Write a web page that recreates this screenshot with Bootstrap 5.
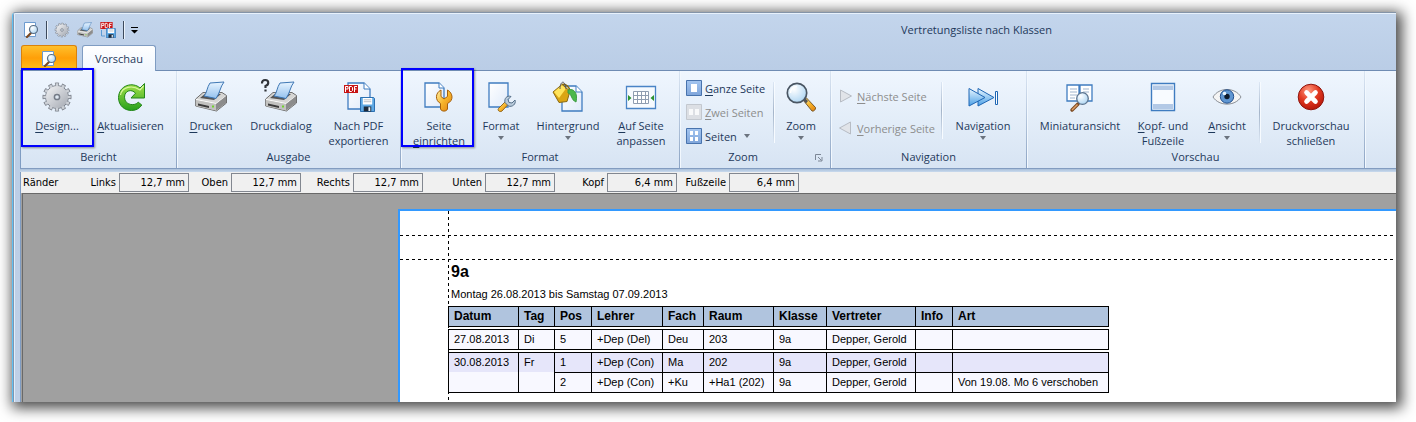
<!DOCTYPE html>
<html lang="de">
<head>
<meta charset="utf-8">
<meta name="viewport" content="width=device-width, initial-scale=1">
<title>Vertretungsliste nach Klassen</title>
<link href="https://cdn.jsdelivr.net/npm/bootstrap@5.3.0/dist/css/bootstrap.min.css" rel="stylesheet">
<style>
  body { background: #fff; font: 11px/15px "Open Sans", "Noto Sans", sans-serif; color: #1e395b; padding: 12px 20px 20px 12px; overflow: hidden; }
  button { font: inherit; color: inherit; background: none; border: 0; padding: 0; white-space: nowrap; }
  button:disabled { color: #8d8d8d; }
  u { text-underline-offset: 2px; }
  .app-window { background: #bfd0e7; border-top: 1px solid #8494a8; border-left: 1px solid #5fc0f2; border-top-left-radius: 4px; box-shadow: 3px 3px 14px 3px rgba(0,0,0,.72); overflow: hidden; }
  .app-frame { border-left: 1px solid #7f95b0; border-top: 1px solid #e8f1fb; padding-left: 6px; box-shadow: inset 1px 0 #e3edf8; background: linear-gradient(#c3d5ec, #bacde6 56px, #bfd0e7); }
  .title-bar { height: 31px; }
  .quick-bar { gap: 7px; padding-left: 3px; }
  .quick-bar button { line-height: 0; }
  .quick-bar svg { width: 16px; height: 16px; }
  .quick-rule { width: 1px; height: 18px; background: #3d4a5c; box-shadow: 1px 0 #e9f1fa; }
  .window-title { margin-right: 25%; }
  .tab-row { height: 25px; gap: 5px; padding-left: 1px; }
  .file-tab { width: 56px; border: 1px solid #d9820c; border-bottom: 0; border-radius: 3px 3px 0 0; background: linear-gradient(#ffc02c, #ff9f08 50%, #ffc01c); }
  .view-tab { width: 74px; height: 26px; border: 1px solid #7f9cc2; border-bottom: 0; border-radius: 3px 3px 0 0; background: linear-gradient(#fff, #eff6fe); z-index: 2; }
  .ribbon { border-top: 1px solid #6f8cb3; border-left: 1px solid #7f9cc2; border-bottom: 1px solid #829cc0; background: linear-gradient(#eff6fe, #d7e4f3); height: 99px; }
  .ribbon-group { padding: 5px 4px 3px; border-right: 1px solid; border-image: linear-gradient(#dbe6f3, #8ba3c3) 1; box-shadow: 1px 0 #f2f8fe; }
  .group-name { line-height: 16px; }
  .cmd { display: flex; flex-direction: column; align-items: center; position: relative; margin-top: 3px; }
  .cmd svg.big { width: 32px; height: 32px; margin: 2px 0 5px; }
  .caret { width: 0; border: 3px solid transparent; border-top: 4px solid #6b737e; border-bottom: 0; }
  .cmd .caret { margin-top: 3px; }
  .w-s { width: 50px; } .w-m { width: 56px; } .w-l { width: 68px; } .w-xl { width: 78px; } .w-xxl { width: 98px; }
  .w-design { width: 64px; } .w-refresh { width: 83px; } .w-print { width: 60px; } .w-dialog { width: 80px; } .w-pdf { width: 75px; }
  .small-cmd { display: flex; align-items: center; gap: 3px; height: 24px; }
  .small-cmd svg { width: 16px; height: 16px; flex: none; }
  .zoom-cmds { width: 87px; padding-left: 2px; }
  .nav-cmds { width: 104px; padding: 4px 0 0 3px; }
  .nav-cmds .small-cmd { height: 32px; }
  .inner-rule { width: 1px; margin: 6px 2px 5px; background: linear-gradient(#dce7f4, #a5b5ca, #dce7f4); box-shadow: 1px 0 #f7fbff; }
  .highlight { position: absolute; left: -4px; top: -11px; width: 73px; height: 79px; border: 2px solid #00f; box-shadow: 1px 1px 2px rgba(0,0,0,.4); pointer-events: none; z-index: 3; }
  .launcher { position: absolute; right: 7px; bottom: 6px; line-height: 0; }
  .under-ribbon { height: 3px; background: linear-gradient(#a9bfd9, #c9daee); }
  .margin-bar { height: 21px; background: #f0f0f0; color: #000; font: 11px/19px "DejaVu Sans Condensed", "Noto Sans", sans-serif; padding-left: 2px; border-left: 1px solid #7f9cc2; }
  .margin-bar input { width: 70px; height: 19px; border: 1px solid #828790; background: #f0f0f0; color: #000; text-align: right; padding: 0 3px; font: inherit; border-radius: 0; }
  .margin-bar label, .margin-lead { text-align: right; padding-right: 3px; width: 52px; }
  .margin-bar .tight { width: 42px; } .margin-bar .loose { width: 62px; }
  .margin-bar .margin-lead { width: 44px; text-align: left; }
  .desk { border-left: 1px solid #7f9cc2; background: #a0a0a0; height: 209px; overflow: hidden; }
  .desk-inner { border-top: 1px solid #696969; border-left: 1px solid #696969; margin-left: 1px; padding: 15px 0 0 375px; height: 100%; }
  .sheet { position: relative; border: solid #3399ff; border-width: 2px 0 0 2px; background: #fff; height: 240px; padding: 51px 0 0 48px; color: #000; font: 11px/14px "Liberation Sans", Arial, sans-serif; }
  .guide-h { position: absolute; left: 0; right: 0; height: 1px; background: repeating-linear-gradient(90deg, #000 0 3px, transparent 3px 6px); }
  .guide-v { position: absolute; top: 0; bottom: 0; left: 48px; width: 1px; background: repeating-linear-gradient(#000 0 3px, transparent 3px 6px); }
  .guide-top { top: 24px; } .guide-body { top: 48px; }
  .sheet h1 { font-size: 16px; line-height: 19px; font-weight: 700; margin: 0 0 6px 3px; }
  .sheet p { margin: 0 0 5px 3px; line-height: 14px; }
  .plan { position: relative; table-layout: fixed; width: 661px; border-collapse: separate; border-spacing: 0; }
  .plan th, .plan td { border: 0 solid #000; border-width: 1px 0 0 1px; padding: 0 0 0 5px; height: 20px; line-height: 19px; background: #f8f8ff; white-space: nowrap; }
  .plan th { background: #b0c4de; font-size: 12px; }
  .plan tr > :last-child { border-right-width: 1px; }
  .plan .closing > * { border-bottom-width: 1px; height: 21px; }
  .plan .shade td { background: #e6e6fa; }
  .plan .merged { border-top-width: 0; }
  .plan .gap-line td { height: 2px; line-height: 0; border: 0; padding: 0; background: none; }
  .c-date { width: 70px; } .c-day { width: 36px; } .c-slot { width: 37px; } .c-teach { width: 71px; } .c-subj { width: 41px; } .c-class { width: 53px; } .c-sub { width: 89px; }
</style>
</head>
<body>
<svg width="0" height="0" class="position-absolute" aria-hidden="true">
  <defs>
    <linearGradient id="gGrey" x2="1" y2="1"><stop stop-color="#f2f3f5"/><stop offset="1" stop-color="#a4a9b2"/></linearGradient>
    <linearGradient id="gGreen" x2="0" y2="1"><stop stop-color="#a6e24b"/><stop offset="1" stop-color="#27a01c"/></linearGradient>
    <linearGradient id="gPaper" x2="1" y2="1"><stop stop-color="#fff"/><stop offset="1" stop-color="#dfeafa"/></linearGradient>
    <linearGradient id="gSheet" x2="0" y2="1"><stop stop-color="#e8f4ff"/><stop offset="1" stop-color="#94c2ee"/></linearGradient>
    <linearGradient id="gGold" x2="1" y2="1"><stop stop-color="#fff0a8"/><stop offset=".5" stop-color="#f7b52b"/><stop offset="1" stop-color="#e07d10"/></linearGradient>
    <linearGradient id="gBlue" x2="0" y2="1"><stop stop-color="#e9f7ff"/><stop offset="1" stop-color="#4a9fe6"/></linearGradient>
    <linearGradient id="gTile" x2="0" y2="1"><stop stop-color="#a3c5f0"/><stop offset="1" stop-color="#7fa5da"/></linearGradient>
    <radialGradient id="gRed" cx=".4" cy=".25" r=".8"><stop stop-color="#ff9a80"/><stop offset=".5" stop-color="#e23a22"/><stop offset="1" stop-color="#b31307"/></radialGradient>
    <radialGradient id="gLens" cx=".35" cy=".3" r=".8"><stop stop-color="#fff"/><stop offset="1" stop-color="#a9d3f2"/></radialGradient>
    <symbol id="i-gear" viewBox="0 0 32 32">
      <circle cx="16" cy="16" r="12" pathLength="120" fill="none" stroke="#7b818b" stroke-width="5" stroke-dasharray="6 4" stroke-dashoffset="3"/>
      <circle cx="16" cy="16" r="11.500" fill="url(#gGrey)" stroke="#7b818b"/>
      <circle cx="16" cy="16" r="11.700" pathLength="120" fill="none" stroke="#ccd0d6" stroke-width="4" stroke-dasharray="4 6" stroke-dashoffset="2"/>
      <circle cx="16" cy="16" r="10.800" fill="url(#gGrey)"/>
      <circle cx="16" cy="16" r="2.600" fill="#dfe8f2" stroke="#747b86" stroke-width="1.500"/>
    </symbol>
    <symbol id="i-refresh" viewBox="0 0 32 32">
      <path d="M28.500 17V2.500l-4.500 4.500C17 .5 3 4 2.500 16.500c0 8.500 6.500 13 13 13 4.500 0 8-2 10.300-5.500l-3.600-2.800c-2.800 4-13.700 3.500-13.700-5 0-7 7.500-8.500 11-4L15 17z" transform="translate(1)" fill="url(#gGreen)" stroke="#22861a"/>
      <path d="M5.500 14C7 6 17 3.500 25 9l3.500-4" fill="none" stroke="#d9f7a0" stroke-width="1.200"/>
    </symbol>
    <symbol id="i-printer" viewBox="0 0 32 32">
      <path d="M.7 18L8 11.500h19l4.500 3V22L21.500 30 .7 25z" fill="#d6d6d4" stroke="#6f6f6f"/>
      <path d="M1 18.500l20 4L31 15" fill="none" stroke="#fff"/>
      <path d="M1 19l20 4v6.500L1 25z" fill="#c2c2c0"/><path d="M21 23l10-8v7l-10 7.500z" fill="#8c8c8c"/>
      <path d="M3 22.500l11 2.500v2L3 24.500z" fill="#3c3c3c"/><path d="M17 24.500h2v2h-2z" fill="#72d42e"/>
      <path d="M5 17l6-5 15 1-7 6z" fill="#555"/>
      <path d="M9 15C12 12 12 6 15 2l14-1c-4 5-4 11-8 16.500z" fill="url(#gSheet)" stroke="#3f78b5"/>
    </symbol>
    <symbol id="i-pdfbox" viewBox="0 0 14 8">
      <path d="M0 0h14v8H0z" fill="#c81414"/>
      <path d="M1.500 7V1.500H4v2.500H1.500M5.500 1.500v5h2l1-1v-3l-1-1zM10.500 7V1.500h2.500M10.500 4h2" fill="none" stroke="#fff"/>
    </symbol>
    <symbol id="i-disk" viewBox="0 0 16 16">
      <path d="M.5.500h14l1 1v14H.5z" fill="#5fa9e4" stroke="#2168ac"/><path d="M3 1h10v7H3z" fill="#fff"/><path d="M4 3h8M4 5h8" stroke="#b9bcc2"/><path d="M4 10h8v5.500H4z" fill="#1d2a3a"/><path d="M9 11h2v4H9z" fill="#e8f0f8"/>
    </symbol>
    <symbol id="i-doc" viewBox="0 0 24 28">
      <path d="M1 1h16l6 6v20H1z" fill="url(#gPaper)" stroke="#3f7cc0" stroke-width="1.300"/><path d="M17 1v6h6" fill="#fff" stroke="#3f7cc0"/>
    </symbol>
    <symbol id="i-pdf" viewBox="0 0 32 32">
      <use href="#i-doc" x="4" y="1" width="24" height="28"/><use href="#i-pdfbox" x="1" y="4" width="14" height="8"/><use href="#i-disk" x="17" y="16" width="15" height="15"/>
    </symbol>
    <symbol id="i-save" viewBox="0 0 16 16">
      <use href="#i-pdfbox" width="13" height="7"/><use href="#i-disk" x="6" y="6" width="10" height="10"/><path d="M1.500 8v6H5" fill="none" stroke="#5b9bd5"/>
    </symbol>
    <symbol id="i-lens" viewBox="0 0 32 32">
      <path d="M18.500 19.500l3-2.500 9 9.500c.5 2-2 4.300-3.500 3.500z" fill="url(#gGold)" stroke="#7a5a28"/><path d="M18 19l2-2 3 3-2 2.500z" fill="#555"/>
      <circle cx="12" cy="12" r="9.700" fill="url(#gLens)" stroke="#4a5663" stroke-width="1.700"/>
      <path d="M5.500 12c0-4 3-6.500 6.500-6.500" fill="none" stroke="#fff" stroke-width="1.500"/>
    </symbol>
    <symbol id="i-preview" viewBox="0 0 16 16">
      <path d="M1.500.500h11v14h-11z" fill="#fff" stroke="#6c9bd0"/><path d="M8 11l-4 4" stroke="#7c4a22" stroke-width="2.200" stroke-linecap="round"/><circle cx="10.500" cy="7.500" r="4" fill="url(#gLens)" stroke="#5b6f86" stroke-width="1.200"/>
    </symbol>
    <symbol id="i-setup" viewBox="0 0 32 32">
      <path d="M2 2h14l5 5v19H2z" fill="url(#gPaper)" stroke="#3f7cc0" stroke-width="1.300"/><path d="M16 2v5h5" fill="#fff" stroke="#3f7cc0"/>
      <path d="M18 9c-6 3-6 10.500-.5 13.500V28c1 2.800 6 2.800 7 0v-5.500C31 19.500 30 12 24.500 9v6.500L21 18l-3-2.500z" fill="url(#gGold)" stroke="#a5600c"/>
    </symbol>
    <symbol id="i-format" viewBox="0 0 32 32">
      <path d="M4 2h19v24H4z" fill="url(#gPaper)" stroke="#3f7cc0" stroke-width="1.300"/>
      <path d="M13.500 27.500l7-7 3 2.500-6.500 7c-2 1.500-5-.5-3.500-2.500z" fill="url(#gGold)" stroke="#94681a"/>
      <path d="M20 21.500c-1-4 2-7.500 6-6l-3 3 1 3 3 .5 3-3c1.500 4-3 7.500-6.500 6z" fill="#b9cbdb" stroke="#566f88"/>
    </symbol>
    <symbol id="i-fill" viewBox="0 0 32 32">
      <path d="M10 5h14l6 6v19H10z" fill="url(#gPaper)" stroke="#3f7cc0" stroke-width="1.300"/><path d="M24 5v6h6" fill="#fff" stroke="#3f7cc0"/>
      <path d="M1 11L10 3.500l8 6.500-3 10.500-8 1z" fill="#dba514" stroke="#8a6a10"/><path d="M2 11l8-7 4 3.500-7 9.500z" fill="#ffe45c"/>
      <path d="M10 3.500c4-1 8 3 8 7" fill="none" stroke="#8a6a10" stroke-width="1.500"/><path d="M8 8c0-8 5-10 6 0" fill="none" stroke="#555"/>
      <path d="M16 9c6-2 10 3 8 12-5-2-4-8-8-9z" fill="#4bb84b" stroke="#3d9c44"/>
    </symbol>
    <symbol id="i-fit" viewBox="0 0 32 32">
      <path d="M1.500 5.500h29v22h-29z" fill="#f6fafe" stroke="#4a84c6" stroke-width="1.300"/>
      <path d="M8.500 10.500h15v12h-15zM8.500 14.500h15M8.500 18.500h15M12.500 10.500v12M16.500 10.500v12M20.500 10.500v12" fill="#fff" stroke="#8f9db0"/>
      <path d="M3 14v6l3.500-3zM29 14v6l-3.500-3z" fill="#2d9431"/>
    </symbol>
    <symbol id="i-one" viewBox="0 0 16 16"><path d="M.5.500h15v15H.5z" fill="url(#gTile)" stroke="#4873ad"/><path d="M5 4h6v8H5z" fill="#fff"/></symbol>
    <symbol id="i-two" viewBox="0 0 16 16"><path d="M.5.500h15v15H.5z" fill="#dcdfe4" stroke="#c3c8cf"/><path d="M3 5h4v6H3zM9 5h4v6H9z" fill="#f8f9fa"/></symbol>
    <symbol id="i-four" viewBox="0 0 16 16"><path d="M.5.500h15v15H.5z" fill="url(#gTile)" stroke="#4873ad"/><path d="M4 3h3v4H4zM9 3h3v4H9zM4 9h3v4H4zM9 9h3v4H9z" fill="#fff"/></symbol>
    <symbol id="i-next" viewBox="0 0 16 16"><path d="M2.500 2l11 6-11 6z" fill="#e1e4e9" stroke="#b7bcc4" stroke-linejoin="round"/></symbol>
    <symbol id="i-prev" viewBox="0 0 16 16"><path d="M12.500 2l-11 6 11 6z" fill="#e1e4e9" stroke="#b7bcc4" stroke-linejoin="round"/></symbol>
    <symbol id="i-skip" viewBox="0 0 32 32">
      <path d="M11 7.500l16 9-16 8.500z" fill="url(#gBlue)" stroke="#1e66b4" stroke-linejoin="round"/><path d="M2 7.500l16 9L2 25z" fill="url(#gBlue)" stroke="#1e66b4" stroke-linejoin="round"/><path d="M28.500 10.500h2v13h-2z" fill="#fff" stroke="#1e66b4"/>
    </symbol>
    <symbol id="i-mini" viewBox="0 0 32 32">
      <path d="M3 4h12v16H3zM16 4h12v16H16z" fill="#fff" stroke="#3f7cc0" stroke-width="1.300"/>
      <path d="M6 8h7M6 11h7M6 14h7M6 17h5M19 8h6M19 11h6" stroke="#9fb4cc"/>
      <path d="M14 23l-6 6" stroke="#7c4a22" stroke-width="3.500" stroke-linecap="round"/><path d="M13.500 23.500l-5.500 5.500" stroke="#e0a068" stroke-width="1.500"/>
      <circle cx="18.500" cy="17.500" r="5.800" fill="url(#gLens)" stroke="#5d7590" stroke-width="1.300"/>
    </symbol>
    <symbol id="i-header" viewBox="0 0 32 32"><path d="M4.500 2.500h23v27h-23z" fill="#f8fbff" stroke="#3f7cc0" stroke-width="1.400"/><path d="M6 4.500h20V9H6zM6 23h20v5H6z" fill="#b3c9e6"/></symbol>
    <symbol id="i-eye" viewBox="0 0 32 32">
      <path d="M2 16C8 6 24 6 30 16 24 25.500 8 25.500 2 16z" fill="#f4f4f4" stroke="#8a8f96"/><circle cx="16" cy="15.500" r="6.700" fill="#5f96d2" stroke="#234f8c"/><circle cx="16" cy="15.500" r="2.700" fill="#0d1a2c"/><circle cx="13.500" cy="12.500" r="1.800" fill="#e8f5ff"/>
    </symbol>
    <symbol id="i-close" viewBox="0 0 32 32"><circle cx="16" cy="16" r="12.800" fill="url(#gRed)" stroke="#8f1710"/><path d="M11.500 11.500l9 9M20.500 11.500l-9 9" stroke="#fff" stroke-width="4.600" stroke-linecap="round"/></symbol>
  </defs>
</svg>

<div class="app-window">
  <div class="app-frame">
    <header class="title-bar d-flex align-items-center">
      <div class="quick-bar d-flex align-items-center">
        <button aria-label="Vorschau"><svg><use href="#i-preview"/></svg></button>
        <span class="quick-rule"></span>
        <button aria-label="Design"><svg><use href="#i-gear"/></svg></button>
        <button aria-label="Drucken"><svg><use href="#i-printer"/></svg></button>
        <button aria-label="Nach PDF exportieren"><svg><use href="#i-save"/></svg></button>
        <span class="quick-rule"></span>
        <button aria-label="Anpassen"><svg viewBox="0 0 16 16"><path d="M0 5h7v1H0zM0 8h7L3.500 11.500z" fill="#000"/></svg></button>
      </div>
      <div class="window-title ms-auto">Vertretungsliste nach Klassen</div>
    </header>

    <nav class="tab-row d-flex">
      <button class="file-tab" aria-label="Datei"><svg width="16" height="16"><use href="#i-preview"/></svg></button>
      <button class="view-tab position-relative">Vorschau</button>
    </nav>

    <div class="ribbon d-flex">
      <section class="ribbon-group d-flex flex-column justify-content-between">
        <div class="d-flex">
          <button class="cmd w-design"><svg class="big"><use href="#i-gear"/></svg><span><u>D</u>esign...</span><span class="highlight"></span></button>
          <button class="cmd w-refresh"><svg class="big"><use href="#i-refresh"/></svg><span><u>A</u>ktualisieren</span></button>
        </div>
        <div class="group-name text-center">Bericht</div>
      </section>

      <section class="ribbon-group d-flex flex-column justify-content-between">
        <div class="d-flex">
          <button class="cmd w-print"><svg class="big"><use href="#i-printer"/></svg><span><u>D</u>rucken</span></button>
          <button class="cmd w-dialog"><svg class="big" viewBox="0 0 32 32" overflow="visible"><use href="#i-printer"/><path d="M-3 3.500Q-3 0 .2 0T3.200 3Q3.200 5 .5 6v2M.5 9.500v2" transform="translate(0 -1)" fill="none" stroke="#30343a" stroke-width="2.200"/></svg><span>Druckdialog</span></button>
          <button class="cmd w-pdf"><svg class="big"><use href="#i-pdf"/></svg><span>Nach PDF<br>exportieren</span></button>
        </div>
        <div class="group-name text-center">Ausgabe</div>
      </section>

      <section class="ribbon-group d-flex flex-column justify-content-between">
        <div class="d-flex">
          <button class="cmd w-l"><svg class="big"><use href="#i-setup"/></svg><span>Seite<br><u>e</u>inrichten</span><span class="highlight"></span></button>
          <button class="cmd w-m"><svg class="big"><use href="#i-format"/></svg><span>Format</span><span class="caret"></span></button>
          <button class="cmd w-xl"><svg class="big"><use href="#i-fill"/></svg><span>Hintergrund</span><span class="caret"></span></button>
          <button class="cmd w-l"><svg class="big"><use href="#i-fit"/></svg><span><u>A</u>uf Seite<br>anpassen</span></button>
        </div>
        <div class="group-name text-center">Format</div>
      </section>

      <section class="ribbon-group d-flex flex-column justify-content-between position-relative">
        <div class="d-flex">
          <div class="zoom-cmds d-flex flex-column">
            <button class="small-cmd"><svg><use href="#i-one"/></svg><span><u>G</u>anze Seite</span></button>
            <button class="small-cmd" disabled><svg><use href="#i-two"/></svg><span><u>Z</u>wei Seiten</span></button>
            <button class="small-cmd"><svg><use href="#i-four"/></svg><span>Seiten</span><span class="caret ms-1"></span></button>
          </div>
          <span class="inner-rule"></span>
          <button class="cmd w-s"><svg class="big"><use href="#i-lens"/></svg><span>Zoom</span><span class="caret"></span></button>
        </div>
        <div class="group-name text-center pe-4">Zoom</div>
        <button class="launcher" aria-label="Zoomeinstellungen"><svg width="8" height="8" viewBox="0 0 8 8"><path d="M.5 6V.500H6M3 3l3.500 3.500M7 3v4H3" fill="none" stroke="#7c8796"/></svg></button>
      </section>

      <section class="ribbon-group d-flex flex-column justify-content-between">
        <div class="d-flex">
          <div class="nav-cmds d-flex flex-column">
            <button class="small-cmd" disabled><svg><use href="#i-next"/></svg><span><u>N</u>ächste Seite</span></button>
            <button class="small-cmd" disabled><svg><use href="#i-prev"/></svg><span><u>V</u>orherige Seite</span></button>
          </div>
          <span class="inner-rule"></span>
          <button class="cmd w-xl"><svg class="big"><use href="#i-skip"/></svg><span>Navigation</span><span class="caret"></span></button>
        </div>
        <div class="group-name text-center">Navigation</div>
      </section>

      <section class="ribbon-group d-flex flex-column justify-content-between">
        <div class="d-flex">
          <button class="cmd w-xxl"><svg class="big"><use href="#i-mini"/></svg><span>Miniaturansicht</span></button>
          <button class="cmd w-l"><svg class="big"><use href="#i-header"/></svg><span><u>K</u>opf- und<br>Fußzeile</span></button>
          <button class="cmd w-print"><svg class="big"><use href="#i-eye"/></svg><span><u>A</u>nsicht</span><span class="caret"></span></button>
          <span class="inner-rule"></span>
          <button class="cmd w-xxl"><svg class="big"><use href="#i-close"/></svg><span>Druckvorschau<br>schließen</span></button>
        </div>
        <div class="group-name text-center">Vorschau</div>
      </section>
    </div>
    <div class="under-ribbon"></div>

    <form class="margin-bar d-flex align-items-center">
      <span class="margin-lead">Ränder</span>
      <label for="m-left">Links</label><input id="m-left" value="12,7 mm">
      <label class="tight" for="m-top">Oben</label><input id="m-top" value="12,7 mm">
      <label for="m-right">Rechts</label><input id="m-right" value="12,7 mm">
      <label class="loose" for="m-bottom">Unten</label><input id="m-bottom" value="12,7 mm">
      <label for="m-head">Kopf</label><input id="m-head" value="6,4 mm">
      <label for="m-foot">Fußzeile</label><input id="m-foot" value="6,4 mm">
    </form>

    <main class="desk">
      <div class="desk-inner">
        <article class="sheet">
          <span class="guide-h guide-top"></span><span class="guide-h guide-body"></span><span class="guide-v"></span>
          <h1>9a</h1>
          <p>Montag 26.08.2013 bis Samstag 07.09.2013</p>
          <table class="plan">
            <colgroup><col class="c-date"><col class="c-day"><col class="c-slot"><col class="c-teach"><col class="c-subj"><col class="c-date"><col class="c-class"><col class="c-sub"><col class="c-slot"><col></colgroup>
            <thead>
              <tr class="closing"><th>Datum</th><th>Tag</th><th>Pos</th><th>Lehrer</th><th>Fach</th><th>Raum</th><th>Klasse</th><th>Vertreter</th><th>Info</th><th>Art</th></tr>
            </thead>
            <tbody>
              <tr class="gap-line"><td colspan="10"></td></tr>
              <tr class="closing"><td>27.08.2013</td><td>Di</td><td>5</td><td>+Dep (Del)</td><td>Deu</td><td>203</td><td>9a</td><td>Depper, Gerold</td><td></td><td></td></tr>
              <tr class="gap-line"><td colspan="10"></td></tr>
              <tr class="shade"><td>30.08.2013</td><td>Fr</td><td>1</td><td>+Dep (Con)</td><td>Ma</td><td>202</td><td>9a</td><td>Depper, Gerold</td><td></td><td></td></tr>
              <tr class="closing"><td class="merged"></td><td class="merged"></td><td>2</td><td>+Dep (Con)</td><td>+Ku</td><td>+Ha1 (202)</td><td>9a</td><td>Depper, Gerold</td><td></td><td>Von 19.08. Mo 6 verschoben</td></tr>
            </tbody>
          </table>
        </article>
      </div>
    </main>
  </div>
</div>
<script src="https://cdn.jsdelivr.net/npm/bootstrap@5.3.0/dist/js/bootstrap.bundle.min.js"></script>
</body>
</html>
